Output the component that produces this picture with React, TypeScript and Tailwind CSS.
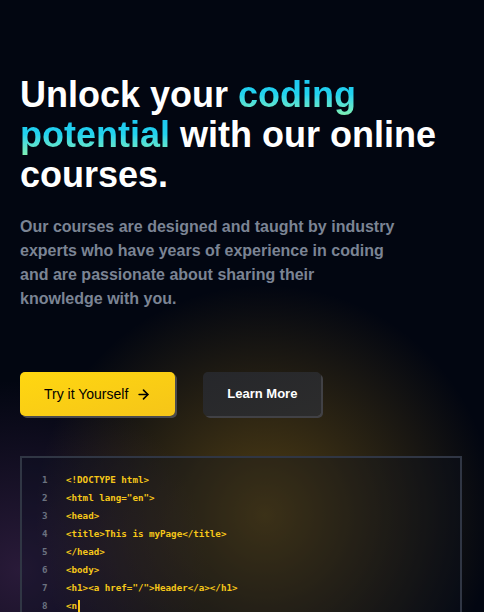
import { ArrowRight } from "lucide-react"

const codeLines = [
  "<!DOCTYPE html>",
  '<html lang="en">',
  "<head>",
  "<title>This is myPage</title>",
  "</head>",
  "<body>",
  '<h1><a href="/">Header</a></h1>',
  "<n",
]

export default function App() {
  return (
    <div
      className="min-h-[700px] bg-[#020611] bg-[radial-gradient(circle_at_265px_515px,rgba(160,120,24,0.5),transparent_230px),radial-gradient(circle_at_20px_570px,rgba(80,46,96,0.5),transparent_190px)] text-white"
      style={{ fontFamily: '"Liberation Sans", Arial, sans-serif' }}
    >
      <div className="px-5 pt-[75px] pb-20">
        <h1 className="text-4xl font-bold leading-10 text-white">
          Unlock your{" "}
          <span className="bg-gradient-to-b from-[#1ec3f2] via-[#22d3ee] to-[#7cf0b4] bg-clip-text text-transparent">
            coding potential
          </span>{" "}
          with our online courses.
        </h1>
        <p className="mt-5 max-w-[378px] text-base font-bold leading-6 text-[#7b8494]">
          Our courses are designed and taught by industry experts who have years of experience in coding and are
          passionate about sharing their knowledge with you.
        </p>

        <div className="mt-[61px] flex items-center gap-7">
          <button className="flex items-center gap-2 rounded-[5px] bg-gradient-to-br from-[#ffd710] to-[#f5c518] px-6 py-3 text-sm leading-5 text-black shadow-[2px_2px_0_#4a4a4d]">
            Try it Yourself
            <ArrowRight size={15} strokeWidth={2.6} />
          </button>
          <button className="rounded-[5px] bg-gradient-to-br from-[#26272b] to-[#2c2c2c] px-6 py-3 text-[13px] font-bold leading-5 text-white shadow-[2px_2px_0_#414145]">
            Learn More
          </button>
        </div>

        <div className="mt-10 w-[442px] border-2 border-[#303644] bg-[#0a1020]/30 pb-6 pl-5 pt-[13px]">
          {codeLines.map((line, i) => (
            <div
              key={i}
              className="flex h-[18px] items-center text-[9.2px] font-bold"
              style={{ fontFamily: '"DejaVu Sans Mono", "Liberation Mono", monospace' }}
            >
              <span className="w-6 text-[#6b7280]">{i + 1}</span>
              <span className="flex items-center whitespace-pre text-[#f6c719]">
                {line}
                {i === codeLines.length - 1 && <span className="ml-px inline-block h-3 w-[2px] bg-[#f6c719]" />}
              </span>
            </div>
          ))}
          <div className="h-10" />
        </div>
      </div>
    </div>
  )
}
